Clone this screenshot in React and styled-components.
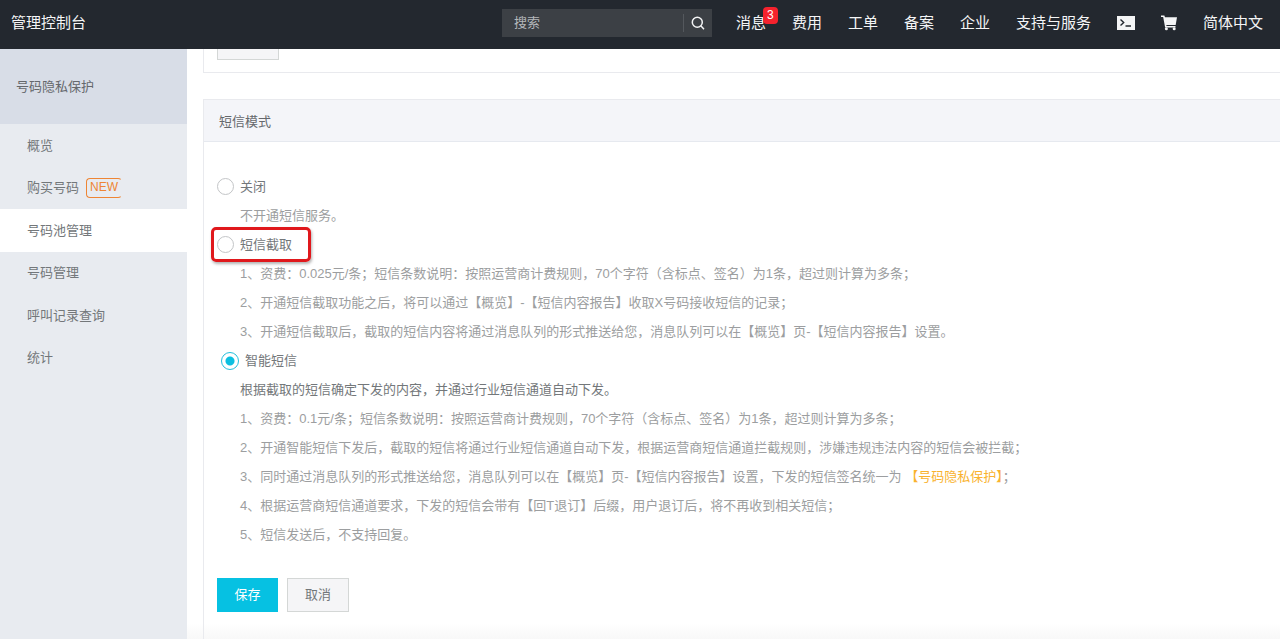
import React, { useState } from "react";
import styled, { createGlobalStyle, css } from "styled-components";

const GlobalStyle = createGlobalStyle`
  *, *::before, *::after { box-sizing: border-box; }
  body {
    margin: 0;
    background: #fff;
    color: #73777a;
    font: 13px/29px "Liberation Sans", "Noto Sans CJK SC", sans-serif;
  }
  button, input { font: inherit; }
  a { color: inherit; text-decoration: none; }
`;

const Page = styled.div`
  display: flex;
  flex-direction: column;
  min-height: 100vh;
`;

const TopBar = styled.header`
  display: flex;
  align-items: center;
  gap: 24px;
  height: 49px;
  padding: 0 17px 4px 11px;
  background: #23282f;
  color: #f4f5f6;
  font-size: 15px;
  white-space: nowrap;
`;

const Brand = styled.a`
  margin-right: auto;
`;

const Search = styled.form`
  display: flex;
  align-items: center;
  width: 210px;
  height: 28px;
  background: #3c4045;
`;

const SearchInput = styled.input`
  flex: 1;
  min-width: 0;
  padding: 0 12px;
  border: 0;
  outline: 0;
  background: none;
  color: #fff;
  font-size: 13px;
  line-height: 20px;
  &::placeholder { color: #b4b7ba; opacity: 1; }
`;

const SearchButton = styled.button`
  display: flex;
  align-items: center;
  justify-content: center;
  width: 29px;
  height: 18px;
  padding: 0;
  border: 0;
  border-left: 1px solid #54585d;
  background: none;
  color: #f4f5f6;
`;

const TopNav = styled.nav`
  display: flex;
  align-items: center;
  gap: 26px;
`;

const TopLink = styled.a`
  position: relative;
  display: flex;
  align-items: center;
`;

const Count = styled.span`
  position: absolute;
  top: -1px;
  left: 27px;
  width: 15px;
  height: 17px;
  border-radius: 4px;
  background: #f5222d;
  color: #fff;
  font-size: 12px;
  line-height: 17px;
  text-align: center;
`;

const Columns = styled.div`
  display: flex;
  flex: 1;
`;

const Sidebar = styled.aside`
  flex: 0 0 187px;
  background: #e8ebf0;
`;

const SideTitle = styled.h2`
  display: flex;
  align-items: center;
  height: 75px;
  margin: 0;
  padding-left: 16px;
  background: #d8dde7;
  color: #65686c;
  font-size: 13px;
  font-weight: 400;
`;

const SideList = styled.ul`
  display: grid;
  grid-auto-rows: 1fr;
  height: 255px;
  margin: 0;
  padding: 0;
  list-style: none;
`;

const SideLink = styled.a`
  display: flex;
  align-items: center;
  gap: 7px;
  height: 100%;
  padding-left: 27px;
  background: ${(p) => (p.$active ? "#fff" : "transparent")};
`;

const NewTag = styled.span`
  height: 20px;
  padding: 0 3px;
  border: 1px solid #ee8534;
  border-right-color: transparent;
  border-radius: 4px;
  color: #ee8534;
  font-size: 12px;
  line-height: 17px;
`;

const Main = styled.main`
  flex: 1;
  display: flex;
  flex-direction: column;
  gap: 26px;
  min-width: 0;
  padding-left: 16px;
  overflow: hidden;
  background: linear-gradient(to top, #f8f8f8, #fff 16px);
`;

const Panel = styled.section`
  border: 1px solid #e9eaee;
  border-right: 0;
  ${(p) =>
    p.$scrolled
      ? css`
          height: 73px;
          margin-top: -49px;
          padding: 25px 13px 0;
        `
      : css`
          flex: 1;
          border-bottom: 0;
        `}
`;

const PanelTitle = styled.h3`
  display: flex;
  align-items: center;
  height: 42px;
  margin: 0;
  padding: 2px 15px 0;
  border-bottom: 1px solid #e6e9ef;
  background: #f4f5f9;
  color: #65686c;
  font-size: 13px;
  font-weight: 400;
`;

const PanelBody = styled.form`
  padding: 30px 13px 27px;
`;

const Option = styled.label`
  position: relative;
  display: flex;
  align-items: center;
  gap: 6px;
  width: fit-content;
  height: 29px;
  padding-left: ${(p) => (p.$checked ? "4px" : "0")};
  ${(p) =>
    p.$marked &&
    css`
      &::after {
        content: "";
        position: absolute;
        inset: -3px -19px -3px -6px;
        border: 3px solid #e0181c;
        border-radius: 5px;
        box-shadow: 1px 2px 3px rgba(0, 0, 0, 0.3);
        pointer-events: none;
      }
    `}
`;

const Radio = styled.input`
  appearance: none;
  width: 17px;
  height: 17px;
  margin: 0;
  border: 1px solid #c3c5c7;
  border-radius: 50%;
  background: #fff;
  &:checked {
    width: 18px;
    height: 18px;
    border-color: #23bfdc;
    background: radial-gradient(circle, #0bbfe0 4px, #fff 5px);
  }
`;

const Notes = styled.div`
  padding-left: 23px;
  color: #9c9ea0;
`;

const Note = styled.p`
  margin: 0;
  color: ${(p) => (p.$strong ? "#73777a" : "inherit")};
`;

const Signature = styled.span`
  color: #f9b32f;
`;

const Actions = styled.div`
  display: flex;
  gap: 9px;
  margin-top: 29px;
`;

const Button = styled.button`
  width: ${(p) => (p.$primary ? "61px" : "62px")};
  height: 34px;
  padding: 0;
  border: 1px solid ${(p) => (p.$primary ? "#06c1e2" : "#d4d7d6")};
  background: ${(p) => (p.$primary ? "#06c1e2" : "#f5f5f7")};
  color: ${(p) => (p.$primary ? "#fff" : "#73777a")};
  font-size: 13px;
  line-height: 32px;
`;

const SearchIcon = () => (
  <svg width="14" height="14" viewBox="0 0 14 14" fill="none" stroke="currentColor" strokeWidth="1.5">
    <circle cx="6.3" cy="6.3" r="5" />
    <path d="M9.8 9.8 13 13.2" />
  </svg>
);

const TerminalIcon = () => (
  <svg width="18" height="14" viewBox="0 0 18 14">
    <path fill="currentColor" d="M0 0h18v14H0z" />
    <path d="M3.5 3.5 6.7 6.5 3.5 9.5M8.5 10h5.5" fill="none" stroke="#23282f" strokeWidth="1.4" />
  </svg>
);

const CartIcon = () => (
  <svg width="16" height="16" viewBox="0 0 17 16" fill="currentColor">
    <path d="M0 0h3.6l.6 1.8H17l-1.4 8.2H5.6l.3 1.2h9.5v1.6H4.4L2.3 1.6H0z" />
    <circle cx="5.7" cy="14.2" r="1.6" />
    <circle cx="14" cy="14.2" r="1.6" />
  </svg>
);

const sideItems = [
  { label: "概览" },
  { label: "购买号码", isNew: true },
  { label: "号码池管理", active: true },
  { label: "号码管理" },
  { label: "呼叫记录查询" },
  { label: "统计" },
];

const modes = [
  { id: "off", label: "关闭", notes: ["不开通短信服务。"] },
  {
    id: "intercept",
    label: "短信截取",
    marked: true,
    notes: [
      "1、资费：0.025元/条；短信条数说明：按照运营商计费规则，70个字符（含标点、签名）为1条，超过则计算为多条；",
      "2、开通短信截取功能之后，将可以通过【概览】-【短信内容报告】收取X号码接收短信的记录；",
      "3、开通短信截取后，截取的短信内容将通过消息队列的形式推送给您，消息队列可以在【概览】页-【短信内容报告】设置。",
    ],
  },
  {
    id: "smart",
    label: "智能短信",
    summary: "根据截取的短信确定下发的内容，并通过行业短信通道自动下发。",
    notes: [
      "1、资费：0.1元/条；短信条数说明：按照运营商计费规则，70个字符（含标点、签名）为1条，超过则计算为多条；",
      "2、开通智能短信下发后，截取的短信将通过行业短信通道自动下发，根据运营商短信通道拦截规则，涉嫌违规违法内容的短信会被拦截；",
      <>
        3、同时通过消息队列的形式推送给您，消息队列可以在【概览】页-【短信内容报告】设置，下发的短信签名统一为{" "}
        <Signature>【号码隐私保护】</Signature>；
      </>,
      "4、根据运营商短信通道要求，下发的短信会带有【回T退订】后缀，用户退订后，将不再收到相关短信；",
      "5、短信发送后，不支持回复。",
    ],
  },
];

export default function App() {
  const [mode, setMode] = useState("smart");

  return (
    <Page>
      <GlobalStyle />
      <TopBar>
        <Brand href="#console">管理控制台</Brand>
        <Search onSubmit={(e) => e.preventDefault()}>
          <SearchInput type="text" placeholder="搜索" aria-label="搜索" />
          <SearchButton type="submit" aria-label="搜索">
            <SearchIcon />
          </SearchButton>
        </Search>
        <TopNav>
          <TopLink href="#messages">
            消息<Count>3</Count>
          </TopLink>
          {["费用", "工单", "备案", "企业", "支持与服务"].map((name) => (
            <TopLink key={name} href="#nav">{name}</TopLink>
          ))}
          <TopLink href="#shell" aria-label="命令行"><TerminalIcon /></TopLink>
          <TopLink href="#cart" aria-label="购物车"><CartIcon /></TopLink>
          <TopLink href="#language">简体中文</TopLink>
        </TopNav>
      </TopBar>
      <Columns>
        <Sidebar>
          <SideTitle>号码隐私保护</SideTitle>
          <SideList>
            {sideItems.map((item) => (
              <li key={item.label}>
                <SideLink href="#section" $active={item.active}>
                  {item.label}
                  {item.isNew && <NewTag>NEW</NewTag>}
                </SideLink>
              </li>
            ))}
          </SideList>
        </Sidebar>
        <Main>
          <Panel $scrolled>
            <Button type="button" aria-label="设置" />
          </Panel>
          <Panel>
            <PanelTitle>短信模式</PanelTitle>
            <PanelBody onSubmit={(e) => e.preventDefault()}>
              {modes.map((m) => (
                <React.Fragment key={m.id}>
                  <Option $checked={mode === m.id} $marked={m.marked}>
                    <Radio
                      type="radio"
                      name="sms-mode"
                      checked={mode === m.id}
                      onChange={() => setMode(m.id)}
                    />
                    {m.label}
                  </Option>
                  <Notes>
                    {m.summary && <Note $strong>{m.summary}</Note>}
                    {m.notes.map((note, i) => (
                      <Note key={i}>{note}</Note>
                    ))}
                  </Notes>
                </React.Fragment>
              ))}
              <Actions>
                <Button type="submit" $primary>保存</Button>
                <Button type="button">取消</Button>
              </Actions>
            </PanelBody>
          </Panel>
        </Main>
      </Columns>
    </Page>
  );
}
